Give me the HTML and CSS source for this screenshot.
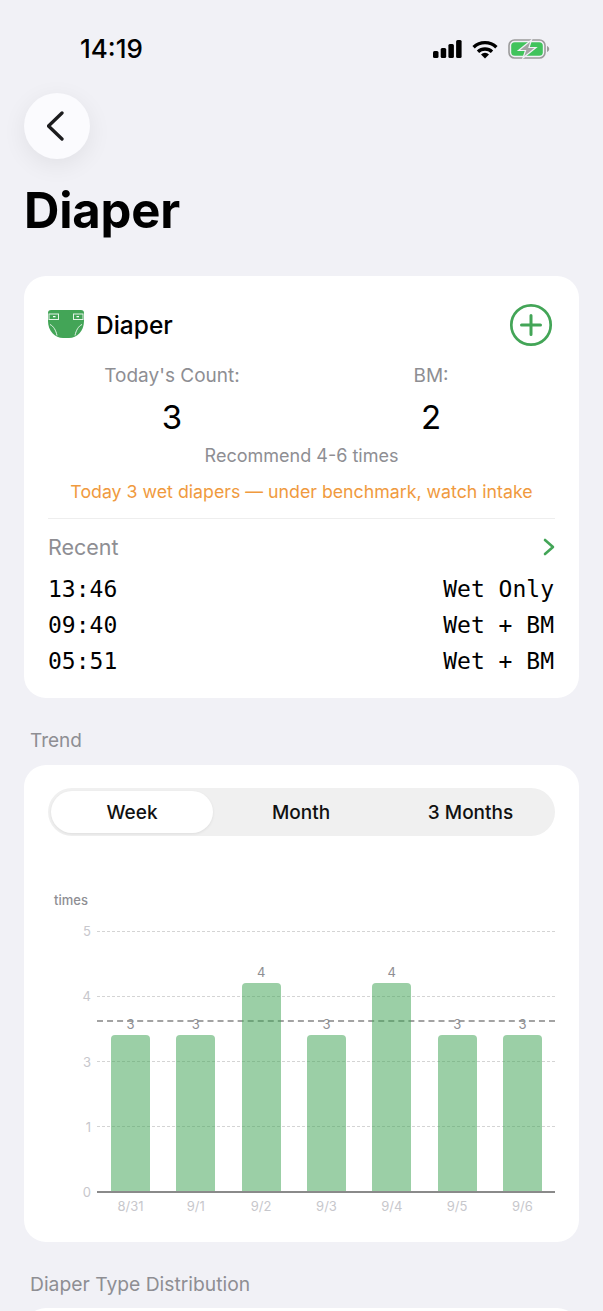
FILE: index.html
```html
<!DOCTYPE html>
<html lang="en">
  <head>
    <meta charset="UTF-8" />
    <title>Diaper</title>
    <link rel="stylesheet" href="styles.css">
  </head>
  <body>
    <!-- Status bar -->
    <div class="status-bar">
      <span class="clock">14:19</span>
      <div class="status-icons">
        <svg width="29" height="18" viewBox="0 0 29 18"><rect x="0" y="11" width="5.500" height="7" rx="1.500"/><rect x="7.700" y="8" width="5.500" height="10" rx="1.500"/><rect x="15.400" y="4" width="5.500" height="14" rx="1.500"/><rect x="23.100" y="0" width="5.500" height="18" rx="1.500"/></svg>
        <svg width="26" height="19" viewBox="0 0 26 19" fill="none" stroke="#000" stroke-width="3.400"><path d="M1.600 7.200a16.500 16.500 0 0 1 22.800 0"/><path d="M6 11.800a10.200 10.200 0 0 1 14 0"/><path d="M13 18.600l-4-4.200a5.600 5.600 0 0 1 8 0z" fill="#000" stroke="none"/></svg>
        <svg width="42" height="20" viewBox="0 0 42 20"><rect x="1" y="1" width="36" height="18" rx="5.500" fill="none" stroke="#9b9b9b" stroke-width="1.600"/><rect x="3.200" y="3.200" width="31.600" height="13.600" rx="3.600" fill="#41c35c"/><path d="M39 7v6c1.400-.5 2.200-1.600 2.200-3S40.400 7.500 39 7z" fill="#9b9b9b"/><path d="M23.500 1L10.500 11.500H17.500L15 19L28 8.500H21z" fill="#a4a4a4" stroke="#f1f1f6" stroke-width="1.200"/></svg>
      </div>
    </div>

    <button class="back-button" aria-label="Back">
      <svg width="20" height="32" viewBox="0 0 20 32" fill="none" stroke="#1c1c1e" stroke-width="3.300" stroke-linecap="round" stroke-linejoin="round"><path d="M15 3L1.500 16 15 29"/></svg>
    </button>

    <h1>Diaper</h1>

    <!-- Today card -->
    <section class="card today-card">
      <div class="card-head">
        <div class="card-title">
          <svg width="36" height="28" viewBox="0 0 36 28">
            <path d="M0 3a3 3 0 0 1 3-3h30a3 3 0 0 1 3 3v8c0 10-7 17-15 17h-6C7 28 0 21 0 11z" fill="#43a557"/>
            <rect x="1" y="4" width="9.500" height="5.500" fill="none" stroke="#e4f3e7" stroke-width="1"/>
            <rect x="25.500" y="4" width="9.500" height="5.500" fill="none" stroke="#e4f3e7" stroke-width="1"/>
            <path d="M5 6.700h2.500M28.500 6.700h2.500" stroke="#fff" stroke-width="1.200"/>
            <path d="M2 14.500c3.500 1.500 6 6 7 11M34 14.500c-3.500 1.500-6 6-7 11" fill="none" stroke="#e4f3e7" stroke-width="1"/>
          </svg>
          <span>Diaper</span>
        </div>
        <svg width="44" height="44" viewBox="0 0 44 44" fill="none" stroke="#43a557" stroke-linecap="round"><circle cx="22" cy="22" r="19.700" stroke-width="2.700"/><path d="M22 12.500v19M12.500 22h19" stroke-width="3"/></svg>
      </div>
      <div class="counts">
        <div class="count-col">
          <div class="count-label">Today's Count:</div>
          <div class="count-value">3</div>
        </div>
        <div class="count-col">
          <div class="count-label">BM:</div>
          <div class="count-value">2</div>
        </div>
      </div>
      <div class="recommend">Recommend 4-6 times</div>
      <div class="warning">Today 3 wet diapers — under benchmark, watch intake</div>
      <div class="recent-head">
        <span>Recent</span>
        <svg width="12" height="18" viewBox="0 0 12 18" fill="none" stroke="#43a557" stroke-width="2.600" stroke-linecap="round" stroke-linejoin="round"><path d="M2 2l8 7-8 7"/></svg>
      </div>
      <div class="recent-row"><span>13:46</span><span>Wet Only</span></div>
      <div class="recent-row"><span>09:40</span><span>Wet + BM</span></div>
      <div class="recent-row"><span>05:51</span><span>Wet + BM</span></div>
    </section>

    <div class="section-label trend-label">Trend</div>

    <!-- Trend card -->
    <section class="card trend-card">
      <div class="tabs">
        <div class="tab active">Week</div>
        <div class="tab">Month</div>
        <div class="tab">3 Months</div>
      </div>
      <div class="unit">times</div>
      <div class="chart">
        <div class="y-axis">
          <span>5</span><span>4</span><span>3</span><span>1</span><span>0</span>
        </div>
        <div class="plot-wrap">
          <div class="plot">
            <div class="grid-lines">
              <i></i><i></i><i></i><i></i>
            </div>
            <div class="avg-line"></div>
            <div class="bars">
              <div class="bar-col"><span>3</span><div class="bar low"></div></div>
              <div class="bar-col"><span>3</span><div class="bar low"></div></div>
              <div class="bar-col"><span>4</span><div class="bar high"></div></div>
              <div class="bar-col"><span>3</span><div class="bar low"></div></div>
              <div class="bar-col"><span>4</span><div class="bar high"></div></div>
              <div class="bar-col"><span>3</span><div class="bar low"></div></div>
              <div class="bar-col"><span>3</span><div class="bar low"></div></div>
            </div>
          </div>
          <div class="x-axis">
            <span>8/31</span><span>9/1</span><span>9/2</span><span>9/3</span><span>9/4</span><span>9/5</span><span>9/6</span>
          </div>
        </div>
      </div>
    </section>

    <div class="section-label type-label">Diaper Type Distribution</div>
    <section class="card next-card"></section>
  </body>
</html>
```

FILE: styles.css
```css
html {
  height: 100%;
  overflow: hidden;
}

body {
  margin: 0;
  height: 1311px;
  overflow: hidden;
  background-color: #f1f1f6;
  font-family: Inter, "Noto Sans", sans-serif;
  color: #000;
}

/* Status bar */
.status-bar {
  height: 93px;
  box-sizing: border-box;
  padding: 35px 53px 0 80px;
  display: flex;
  justify-content: space-between;
  align-items: flex-start;
}

.clock {
  font-size: 26px;
  line-height: 28px;
  font-weight: 500;
}

.status-icons {
  display: flex;
  align-items: center;
  gap: 10px;
  height: 28px;
}

.back-button {
  display: flex;
  align-items: center;
  justify-content: center;
  width: 66px;
  height: 66px;
  margin-left: 24px;
  padding: 0;
  border: none;
  border-radius: 50%;
  background-color: #fbfbfe;
  box-shadow: 0 6px 24px rgba(0, 0, 0, 0.07);
}

h1 {
  margin: 20px 0 0 24px;
  font-size: 49px;
  line-height: 64px;
  font-weight: 700;
  letter-spacing: -0.200px;
}

.card {
  margin: 0 24px;
  background-color: #fff;
  border-radius: 22px;
  box-sizing: border-box;
}

/* Today card */
.today-card {
  height: 422px;
  margin-top: 33px;
  padding: 27px 24px 0;
}

.card-head {
  display: flex;
  justify-content: space-between;
  align-items: center;
  height: 44px;
  padding-right: 2px;
}

.card-title {
  display: flex;
  align-items: center;
  gap: 12px;
  font-size: 24.500px;
  font-weight: 500;
}

.card-title svg {
  margin-top: -2px;
}

.counts {
  display: grid;
  grid-template-columns: 248px 100px;
  column-gap: 85px;
  margin-top: 17px;
}

.count-col {
  text-align: center;
}

.count-label {
  font-size: 19px;
  line-height: 24px;
  color: #8e8e93;
}

.count-value {
  margin-top: 9px;
  font-size: 33px;
  line-height: 40px;
  font-weight: 400;
}

.recommend {
  margin-top: 7px;
  text-align: center;
  font-size: 18px;
  line-height: 24px;
  color: #8e8e93;
}

.warning {
  margin-top: 12px;
  padding-bottom: 14px;
  border-bottom: 1px solid #eeeeee;
  text-align: center;
  font-size: 17.750px;
  line-height: 24px;
  color: #f09a3e;
}

.recent-head {
  display: flex;
  justify-content: space-between;
  align-items: center;
  height: 28px;
  margin-top: 14px;
  font-size: 21.500px;
  color: #8e8e93;
}

.recent-row {
  display: flex;
  justify-content: space-between;
  height: 36px;
  align-items: center;
  font-family: "DejaVu Sans Mono", monospace;
  font-size: 23px;
  margin-right: 1px;
}

.recent-head + .recent-row {
  margin-top: 10px;
}

.section-label {
  margin-left: 30px;
  font-size: 19px;
  line-height: 24px;
  color: #8e8e93;
}

.trend-label {
  margin-top: 31px;
}

.type-label {
  margin-top: 30px;
  font-size: 19.300px;
}

/* Trend card */
.trend-card {
  height: 477px;
  margin-top: 12px;
  padding: 23px 24px 0;
}

.tabs {
  display: grid;
  grid-template-columns: 162px 176px 163px;
  height: 48px;
  padding: 3px;
  box-sizing: border-box;
  border-radius: 24px;
  background-color: #f0f0f0;
}

.tab {
  display: flex;
  align-items: center;
  justify-content: center;
  border-radius: 21px;
  font-size: 19px;
  font-weight: 500;
  color: #111;
}

.tab.active {
  background-color: #fff;
  box-shadow: 0 1px 3px rgba(0, 0, 0, 0.08);
}

.unit {
  margin: 55px 0 0 6px;
  font-size: 13px;
  line-height: 18px;
  font-weight: 500;
  color: #8e8e93;
}

.chart {
  display: flex;
  margin-top: 22px;
}

.y-axis {
  width: 49px;
  height: 277px;
  box-sizing: border-box;
  display: flex;
  flex-direction: column;
  justify-content: space-between;
  margin-top: -8px;
  padding-right: 6px;
  text-align: right;
  font-size: 13px;
  line-height: 16px;
  color: #c7c7cc;
}

.plot-wrap {
  flex: 1;
}

.plot {
  position: relative;
  height: 260px;
  border-bottom: 2px solid #8a8a8a;
}

.grid-lines {
  position: absolute;
  inset: 0;
  display: flex;
  flex-direction: column;
  justify-content: space-between;
  height: 196px;
}

.grid-lines i {
  display: block;
  border-top: 1px dashed #d4d4d4;
}

.avg-line {
  position: absolute;
  left: 0;
  right: 0;
  top: 89px;
  border-top: 2px dashed #a3a3a3;
}

.bars {
  position: absolute;
  inset: 0;
  display: flex;
  padding: 0 13px 0 14px;
  justify-content: space-between;
  align-items: flex-end;
}

.bar-col {
  width: 39px;
  display: flex;
  flex-direction: column;
  align-items: center;
  font-size: 13px;
  line-height: 16px;
  color: #8e8e93;
}

.bar-col span {
  margin-bottom: 3px;
}

.bar {
  width: 39px;
  border-radius: 4px 4px 0 0;
  background-color: rgba(67, 165, 87, 0.53);
}

.bar.low {
  height: 156px;
}

.bar.high {
  height: 208px;
}

.x-axis {
  display: flex;
  justify-content: space-between;
  padding: 5px 13px 0 14px;
  font-size: 13px;
  line-height: 16px;
  color: #c7c7cc;
}

.x-axis span {
  width: 39px;
  text-align: center;
}

.next-card {
  height: 60px;
  margin-top: 12px;
}
```
